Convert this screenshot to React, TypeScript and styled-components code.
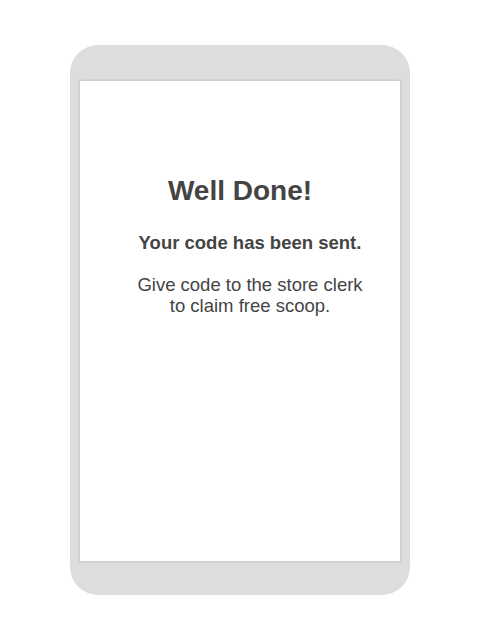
import React from "react";
import styled, { createGlobalStyle } from "styled-components";

const Global = createGlobalStyle`
  html, body { margin: 0; padding: 0; background: #fff; }
  body { font-family: "Liberation Sans", Arial, sans-serif; }
`;

const Page = styled.div`
  display: flex;
  justify-content: center;
  padding-top: 45px;
`;

const Device = styled.div`
  width: 340px;
  box-sizing: border-box;
  padding: 35px 9px 33px;
  background: #dddddd;
  border-radius: 28px;
`;

const Screen = styled.div`
  width: 322px;
  height: 482px;
  box-sizing: border-box;
  background: #fff;
  border: 1px solid #cfcfcf;
  box-shadow: 0 0 2px rgba(0, 0, 0, 0.15);
  display: flex;
  flex-direction: column;
  align-items: center;
  padding-top: 94px;
  color: #444;
`;

const Title = styled.h1`
  margin: 0;
  font-size: 28px;
  line-height: 32px;
  font-weight: bold;
`;

const Body = styled.div`
  padding-left: 20px;
  text-align: center;
`;

const Lead = styled.p`
  margin: 25px 0 0;
  font-size: 18.5px;
  line-height: 21px;
  font-weight: bold;
`;

const Text = styled.p`
  margin: 21px 0 0;
  font-size: 18.5px;
  line-height: 21px;
`;

export default function App() {
  return (
    <>
      <Global />
      <Page>
        <Device>
          <Screen>
            <Title>Well Done!</Title>
            <Body>
              <Lead>Your code has been sent.</Lead>
              <Text>
                Give code to the store clerk
                <br />
                to claim free scoop.
              </Text>
            </Body>
          </Screen>
        </Device>
      </Page>
    </>
  );
}
